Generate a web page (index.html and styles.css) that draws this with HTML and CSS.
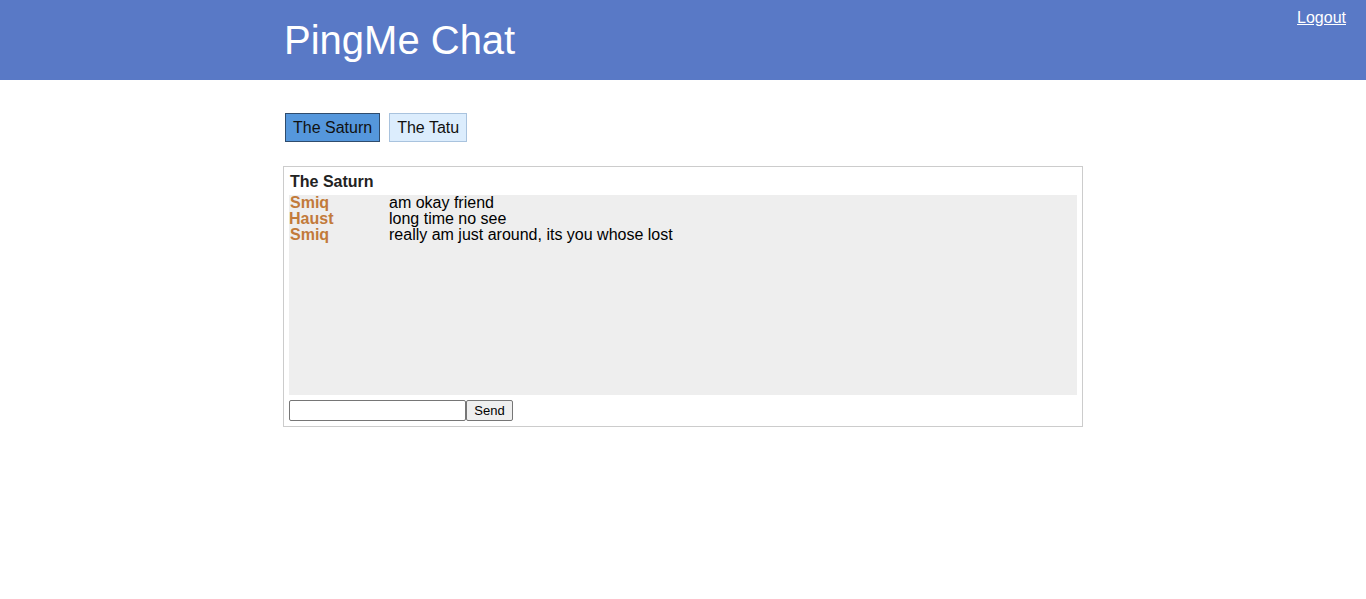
FILE: index.html
```html
<!DOCTYPE html>
<html>
<head>
<meta charset="utf-8">
<title>PingMe Chat</title>
<link rel="stylesheet" href="styles.css">
</head>
<body>
<header class="header">
  <div class="container header-inner">
    <h1 class="title">PingMe Chat</h1>
  </div>
  <a class="logout" href="#">Logout</a>
</header>
<main class="container">
  <nav class="tabs">
    <button class="tab tab-active">The Saturn</button>
    <button class="tab">The Tatu</button>
  </nav>
  <section class="chat">
    <div class="chat-title">The Saturn</div>
    <div class="messages">
      <div class="msg"><span class="name">Smiq</span><span class="text">am okay friend</span></div>
      <div class="msg"><span class="name name-alt">Haust</span><span class="text">long time no see</span></div>
      <div class="msg"><span class="name">Smiq</span><span class="text">really am just around, its you whose lost</span></div>
    </div>
    <form class="composer">
      <input class="input" type="text"><button class="send" type="button">Send</button>
    </form>
  </section>
</main>
</body>
</html>
```
FILE: styles.css
```css
* { box-sizing: border-box; }
body {
  margin: 0;
  font-family: "Liberation Sans", Arial, sans-serif;
  font-size: 16px;
  color: #000;
  background: #fff;
}
.container {
  width: 800px;
  margin: 0 auto;
}
.header {
  position: relative;
  height: 80px;
  background: #5979c6;
}
.header-inner {
  padding-top: 16px;
}
.title {
  margin: 0 0 0 1px;
  font-weight: normal;
  font-size: 40px;
  line-height: 48px;
  color: #fff;
}
.logout {
  position: absolute;
  top: 9px;
  right: 20px;
  color: #fff;
  font-size: 16px;
  line-height: 18px;
  text-decoration: underline;
}
.tabs {
  display: flex;
  gap: 9px;
  padding: 33px 0 0 2px;
}
.tab {
  font-family: "Liberation Sans", Arial, sans-serif;
  font-size: 16px;
  line-height: 19px;
  padding: 4px 7px;
  margin: 0;
  color: #111;
  background: #dcedfd;
  border: 1px solid #a9c3de;
  border-radius: 0;
  cursor: pointer;
}
.tab-active {
  background: #5597dc;
  border-color: #2f4c6d;
}
.chat {
  margin-top: 24px;
  border: 1px solid #cccccc;
  padding: 5px;
}
.chat-title {
  font-weight: bold;
  font-size: 16px;
  line-height: 18px;
  color: #222;
  padding: 1px 0 4px 1px;
}
.messages {
  height: 200px;
  background: #eeeeee;
}
.msg {
  display: flex;
  line-height: 16px;
}
.name {
  width: 100px;
  padding-left: 1px;
  font-weight: bold;
  color: #c27a3a;
}
.name-alt { padding-left: 0; }
.composer {
  display: flex;
  margin: 5px 0 0;
}
.input {
  width: 177px;
  height: 21px;
  margin: 0;
  padding: 1px 2px;
  border: 1px solid #767676;
  border-radius: 2px;
  font-size: 13px;
}
.send {
  width: 47px;
  height: 21px;
  margin: 0;
  padding: 0;
  font-family: "Liberation Sans", Arial, sans-serif;
  font-size: 13px;
  color: #000;
  background: #efefef;
  border: 1px solid #767676;
  border-radius: 2px;
}
```
